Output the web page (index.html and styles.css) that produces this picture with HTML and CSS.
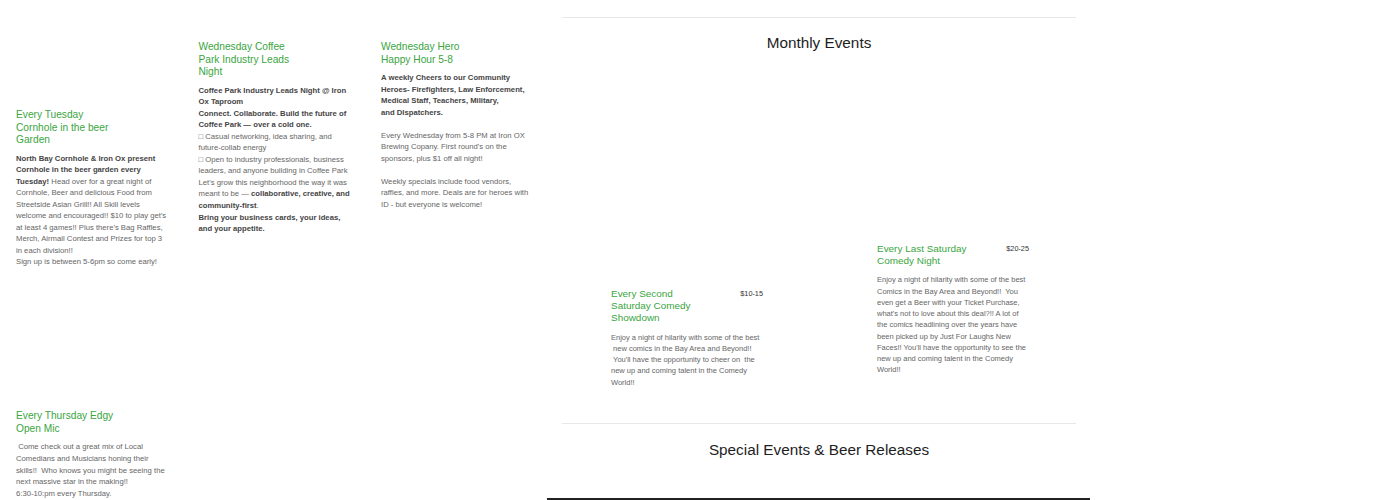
FILE: index.html
```html
<!DOCTYPE html>
<html lang="en">
<head>
    <meta charset="UTF-8">
    <meta name="viewport" content="width=device-width, initial-scale=1.0">
    <title>Iron Ox Events</title>
    <link rel="stylesheet" href="styles.css">
</head>
<body>
    <div class="page">
        <!-- Eventos semanales -->
        <section class="weekly">
            <div class="event event-tuesday">
                <div class="event-head">
                    <h3 class="event-title">Every Tuesday Cornhole in the beer Garden</h3>
                </div>
                <p><strong>North Bay Cornhole &amp; Iron Ox present Cornhole in the beer garden every Tuesday!</strong> Head over for a great night of Cornhole, Beer and delicious Food from Streetside Asian Grill!! All Skill levels welcome and encouraged!! $10 to play get's at least 4 games!! Plus there's Bag Raffles, Merch, Airmail Contest and Prizes for top 3 in each division!!<br>Sign up is between 5-6pm so come early!</p>
            </div>

            <div class="event">
                <div class="event-head">
                    <h3 class="event-title">Wednesday Coffee Park Industry Leads Night</h3>
                </div>
                <p><strong>Coffee Park Industry Leads Night @ Iron Ox Taproom</strong><br><strong>Connect. Collaborate. Build the future of Coffee Park — over a cold one.</strong><br>□ Casual networking, idea sharing, and future-collab energy<br>□ Open to industry professionals, business leaders, and anyone building in Coffee Park<br>Let's grow this neighborhood the way it was meant to be — <strong>collaborative, creative, and community-first</strong>.<br><strong>Bring your business cards, your ideas, and your appetite.</strong></p>
            </div>

            <div class="event">
                <div class="event-head">
                    <h3 class="event-title">Wednesday Hero Happy Hour 5-8</h3>
                </div>
                <p><strong>A weekly Cheers to our Community Heroes- Firefighters, Law Enforcement, Medical Staff, Teachers, Military,<br>and DIspatchers.</strong></p>
                <p>Every Wednesday from 5-8 PM at Iron OX Brewing Copany. First round's on the sponsors, plus $1 off all night!</p>
                <p>Weekly specials include food vendors,<br>raffles, and more. Deals are for heroes with ID - but everyone is welcome!</p>
            </div>

            <div class="event event-thursday">
                <div class="event-head">
                    <h3 class="event-title">Every Thursday Edgy Open Mic</h3>
                </div>
                <p>&nbsp;Come check out a great mix of Local Comedians and Musicians honing their skills!!&nbsp; Who knows you might be seeing the next massive star in the making!!<br>6:30-10:pm every Thursday.</p>
            </div>
        </section>

        <!-- Eventos mensuales -->
        <section class="monthly">
            <div class="monthly-inner">
                <hr class="rule">
                <h2 class="section-title">Monthly Events</h2>

                <div class="monthly-list">
                    <div class="event event-second">
                        <div class="event-head">
                            <h3 class="event-title">Every Second Saturday Comedy Showdown</h3>
                            <span class="price">$10-15</span>
                        </div>
                        <p>Enjoy a night of hilarity with some of the best<br>&nbsp;new comics in the Bay Area and Beyond!!<br>&nbsp;You'll have the opportunity to cheer on&nbsp; the new up and coming talent in the Comedy World!!</p>
                    </div>

                    <div class="event">
                        <div class="event-head">
                            <h3 class="event-title">Every Last Saturday Comedy Night</h3>
                            <span class="price">$20-25</span>
                        </div>
                        <p>Enjoy a night of hilarity with some of the best<br>Comics in the Bay Area and Beyond!!&nbsp; You even get a Beer with your Ticket Purchase, what's not to love about this deal?!! A lot of the comics headlining over the years have been picked up by Just For Laughs New Faces!! You'll have the opportunity to see the new up and coming talent in the Comedy World!!</p>
                    </div>
                </div>

                <hr class="rule rule-special">
                <h2 class="section-title">Special Events &amp; Beer Releases</h2>
            </div>
            <div class="special-list"></div>
        </section>
    </div>
</body>
</html>
```

FILE: styles.css
```css
body {
    margin: 0;
    background-color: #ffffff;
    font-family: 'Liberation Sans', Arial, sans-serif;
    color: #666666;
}

.page {
    display: flex;
    align-items: flex-start;
    width: 1400px;
}

/* Columna semanal */
.weekly {
    width: 547px;
    flex-shrink: 0;
    box-sizing: border-box;
    padding: 41px 0 0 16px;
    display: grid;
    grid-template-columns: repeat(3, 152.5px);
    column-gap: 30px;
    align-items: start;
}

.event-tuesday {
    margin-top: 68px;
}

.event-thursday {
    margin-top: 142.5px;
}

.event-head {
    display: flex;
    align-items: flex-start;
    margin-bottom: 6px;
}

.event-title {
    width: 102px;
    margin: 0;
    font-size: 10.2px;
    line-height: 12.5px;
    font-weight: normal;
    color: #3aa541;
}

.price {
    flex: 1;
    text-align: right;
    font-size: 7.3px;
    line-height: 12.2px;
    color: #333333;
}

.event p {
    margin: 0 0 11.55px;
    font-size: 7.7px;
    line-height: 11.55px;
}

.event p:last-child {
    margin-bottom: 0;
}

.event strong {
    color: #454545;
}

/* Columna mensual */
.monthly {
    width: 543px;
    flex-shrink: 0;
}

.monthly-inner {
    padding: 0 14px 0 15px;
}

.rule {
    margin: 17px 0 0;
    border: 0;
    border-top: 1px solid #e8e8e8;
}

.rule-special {
    margin-top: 35px;
}

.section-title {
    margin: 16px 0 0;
    font-size: 15.3px;
    line-height: 18px;
    font-weight: normal;
    text-align: center;
    color: #1e1e1e;
}

.rule-special + .section-title {
    margin-top: 17px;
}

.monthly-list {
    display: grid;
    grid-template-columns: 152px 152px;
    column-gap: 114px;
    align-items: start;
    padding-left: 49px;
    margin-top: 190.9px;
}

.monthly-list .event-head {
    margin-bottom: 7px;
}

.monthly-list .event-title {
    width: 99px;
    font-size: 9.95px;
    line-height: 12.2px;
}

.monthly-list .event p {
    font-size: 7.5px;
    line-height: 11.25px;
}

.event-second {
    margin-top: 45px;
}

.special-list {
    margin-top: 39px;
    height: 40px;
    border-top: 2px solid #222222;
}
```
